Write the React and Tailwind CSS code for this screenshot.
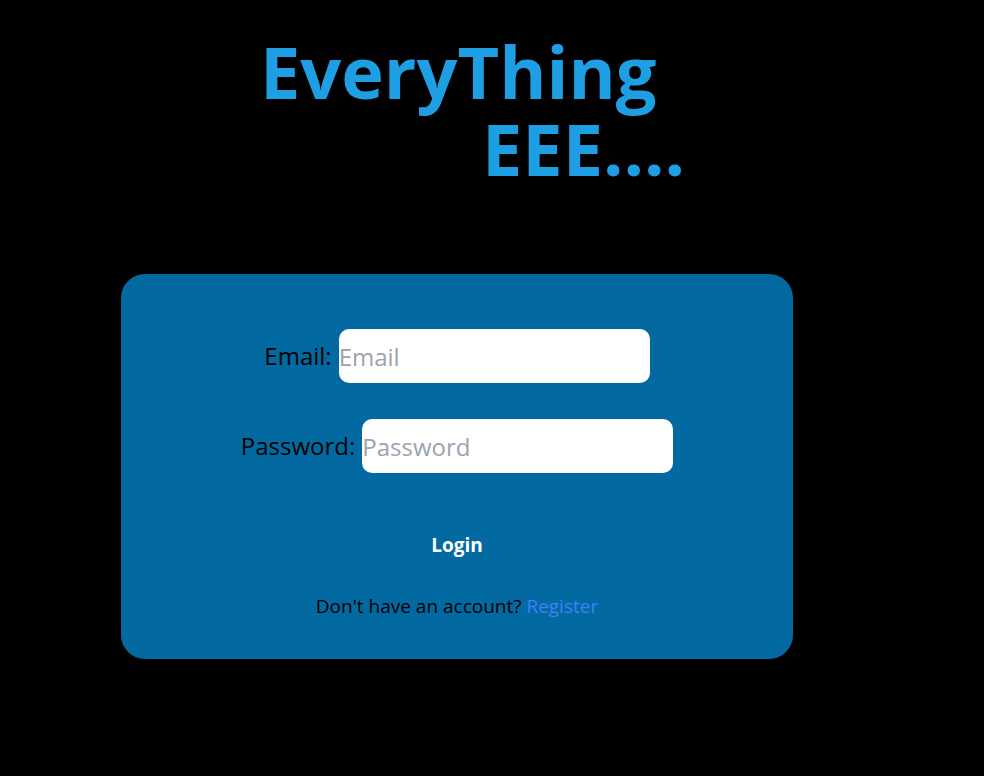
export default function App() {
  return (
    <div className="min-h-screen bg-black font-['Open_Sans',sans-serif]">
      {/* Title */}
      <div className="pt-[33px] font-bold text-[#1e9fe3] text-[72px] leading-[77px]">
        <div className="pl-[260px]">EveryThing</div>
        <div className="pl-[482px]">EEE....</div>
      </div>

      {/* Card */}
      <div className="ml-[121px] mt-[87px] w-[672px] h-[385px] rounded-3xl bg-[#0369a1] flex flex-col items-center pt-[55px]">
        <div className="flex items-center">
          <label className="text-[24px] text-black mr-[7px]">Email:</label>
          <input
            type="email"
            placeholder="Email"
            className="w-[311px] h-[54px] rounded-[10px] bg-white text-[24px] outline-none placeholder:text-[#9ca3af]"
          />
        </div>
        <div className="flex items-center mt-[36px]">
          <label className="text-[24px] text-black mr-[7px]">Password:</label>
          <input
            type="password"
            placeholder="Password"
            className="w-[311px] h-[54px] rounded-[10px] bg-white text-[24px] outline-none placeholder:text-[#9ca3af]"
          />
        </div>
        <button className="mt-[58px] text-white font-bold text-[19px]">Login</button>
        <p className="mt-[32px] text-[19px] text-black">
          Don't have an account? <a className="text-[#3b82f6]">Register</a>
        </p>
      </div>
    </div>
  );
}
